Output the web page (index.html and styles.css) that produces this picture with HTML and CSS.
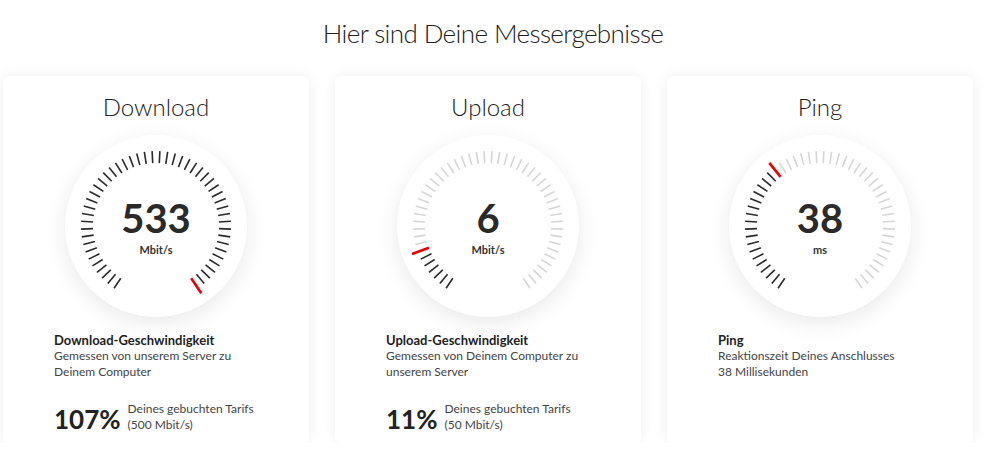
FILE: index.html
```html
<!DOCTYPE html>
<html lang="de">
<head>
  <meta charset="UTF-8">
  <meta name="viewport" content="width=device-width, initial-scale=1.0">
  <title>Speedtest Ergebnisse</title>
  <link rel="stylesheet" href="styles.css">
</head>
<body>
<h1 class="page-title">Hier sind Deine Messergebnisse</h1>

<div class="results">
  <div class="card">
    <h2 class="card-title">Download</h2>
    <div class="gauge" data-active="49">
      <svg class="gauge-ticks" viewBox="0 0 182 182"></svg>
      <div class="gauge-value">533</div>
      <div class="gauge-unit">Mbit/s</div>
    </div>
    <div class="info">
      <p class="info-title">Download-Geschwindigkeit</p>
      <p class="info-text">Gemessen von unserem Server zu<br>Deinem Computer</p>
      <div class="tarif">
        <span class="tarif-percent">107%</span>
        <span class="tarif-text">Deines gebuchten Tarifs<br>(500 Mbit/s)</span>
      </div>
    </div>
  </div>

  <div class="card">
    <h2 class="card-title">Upload</h2>
    <div class="gauge" data-active="6">
      <svg class="gauge-ticks" viewBox="0 0 182 182"></svg>
      <div class="gauge-value">6</div>
      <div class="gauge-unit">Mbit/s</div>
    </div>
    <div class="info">
      <p class="info-title">Upload-Geschwindigkeit</p>
      <p class="info-text">Gemessen von Deinem Computer zu<br>unserem Server</p>
      <div class="tarif">
        <span class="tarif-percent">11%</span>
        <span class="tarif-text">Deines gebuchten Tarifs<br>(50 Mbit/s)</span>
      </div>
    </div>
  </div>

  <div class="card">
    <h2 class="card-title">Ping</h2>
    <div class="gauge" data-active="18">
      <svg class="gauge-ticks" viewBox="0 0 182 182"></svg>
      <div class="gauge-value">38</div>
      <div class="gauge-unit">ms</div>
    </div>
    <div class="info">
      <p class="info-title">Ping</p>
      <p class="info-text">Reaktionszeit Deines Anschlusses<br>38 Millisekunden</p>
    </div>
  </div>
</div>

<script>
  // draw the tick ring of every gauge
  const NS = "http://www.w3.org/2000/svg";
  const TICKS = 50;
  const START = 34;
  const SWEEP = 292;

  document.querySelectorAll(".gauge").forEach(function (gauge) {
    const svg = gauge.querySelector(".gauge-ticks");
    const active = parseInt(gauge.dataset.active, 10);

    for (let i = 0; i < TICKS; i++) {
      const angle = START + i * SWEEP / (TICKS - 1);
      const line = document.createElementNS(NS, "line");
      line.setAttribute("x1", 91);
      line.setAttribute("x2", 91);
      line.setAttribute("y1", 91 + 63);

      if (i === active) {
        line.setAttribute("y2", 91 + 81);
        line.setAttribute("class", "tick tick-current");
      } else if (i < active) {
        line.setAttribute("y2", 91 + 75);
        line.setAttribute("class", "tick tick-done");
      } else {
        line.setAttribute("y2", 91 + 75);
        line.setAttribute("class", "tick");
      }

      line.setAttribute("transform", "rotate(" + angle + " 91 91)");
      svg.appendChild(line);
    }
  });
</script>
</body>
</html>
```

FILE: styles.css
```css
body {
  margin: 0;
  font-family: Lato, "Open Sans", sans-serif;
  color: #333;
  background: #fff;
}

.page-title {
  margin: 0;
  padding: 16px 13px 0 0;
  height: 60px;
  box-sizing: border-box;
  font-size: 26px;
  font-weight: 300;
  letter-spacing: -0.6px;
  line-height: 34px;
  text-align: center;
  color: #222;
}

.results {
  display: flex;
  gap: 26px;
  margin: 16px 0 0 3px;
}

.card {
  width: 306px;
  height: 367px;
  background: #fff;
  border-radius: 6px;
  box-shadow: 0 0 14px rgba(0, 0, 0, 0.07);
  padding-top: 15px;
  box-sizing: border-box;
}

.card-title {
  margin: 0;
  font-size: 24px;
  font-weight: 300;
  line-height: 32px;
  text-align: center;
  color: #222;
}

.gauge {
  position: relative;
  width: 182px;
  height: 182px;
  margin: 12px auto 0;
  border-radius: 50%;
  background: #fff;
  box-shadow: 0 6px 22px rgba(0, 0, 0, 0.09);
  display: flex;
  flex-direction: column;
  align-items: center;
  justify-content: center;
}

.gauge-ticks {
  position: absolute;
  left: 0;
  top: 0;
  width: 182px;
  height: 182px;
}

.tick {
  stroke: #d6d6d6;
  stroke-width: 1.6;
}

.tick-done {
  stroke: #2a2a2a;
}

.tick-current {
  stroke: #e60000;
  stroke-width: 2.6;
}

.gauge-value {
  position: relative;
  font-size: 40px;
  font-weight: 700;
  line-height: 42px;
  color: #2a2a2a;
  margin-top: 2px;
}

.gauge-unit {
  position: relative;
  font-size: 11px;
  font-weight: 700;
  line-height: 14px;
  color: #333;
  margin-top: 4px;
}

.info {
  padding: 15px 0 0 51px;
}

.info-title {
  margin: 0;
  font-size: 13px;
  font-weight: 700;
  line-height: 16px;
  color: #222;
}

.info-text {
  margin: 0;
  font-size: 12px;
  line-height: 16px;
  color: #444;
}

.tarif {
  display: flex;
  align-items: center;
  gap: 7px;
  margin-top: 23px;
}

.tarif-percent {
  font-size: 26px;
  font-weight: 700;
  line-height: 32px;
  color: #222;
}

.tarif-text {
  font-size: 12px;
  line-height: 16px;
  color: #444;
  margin-top: -4px;
}
```
